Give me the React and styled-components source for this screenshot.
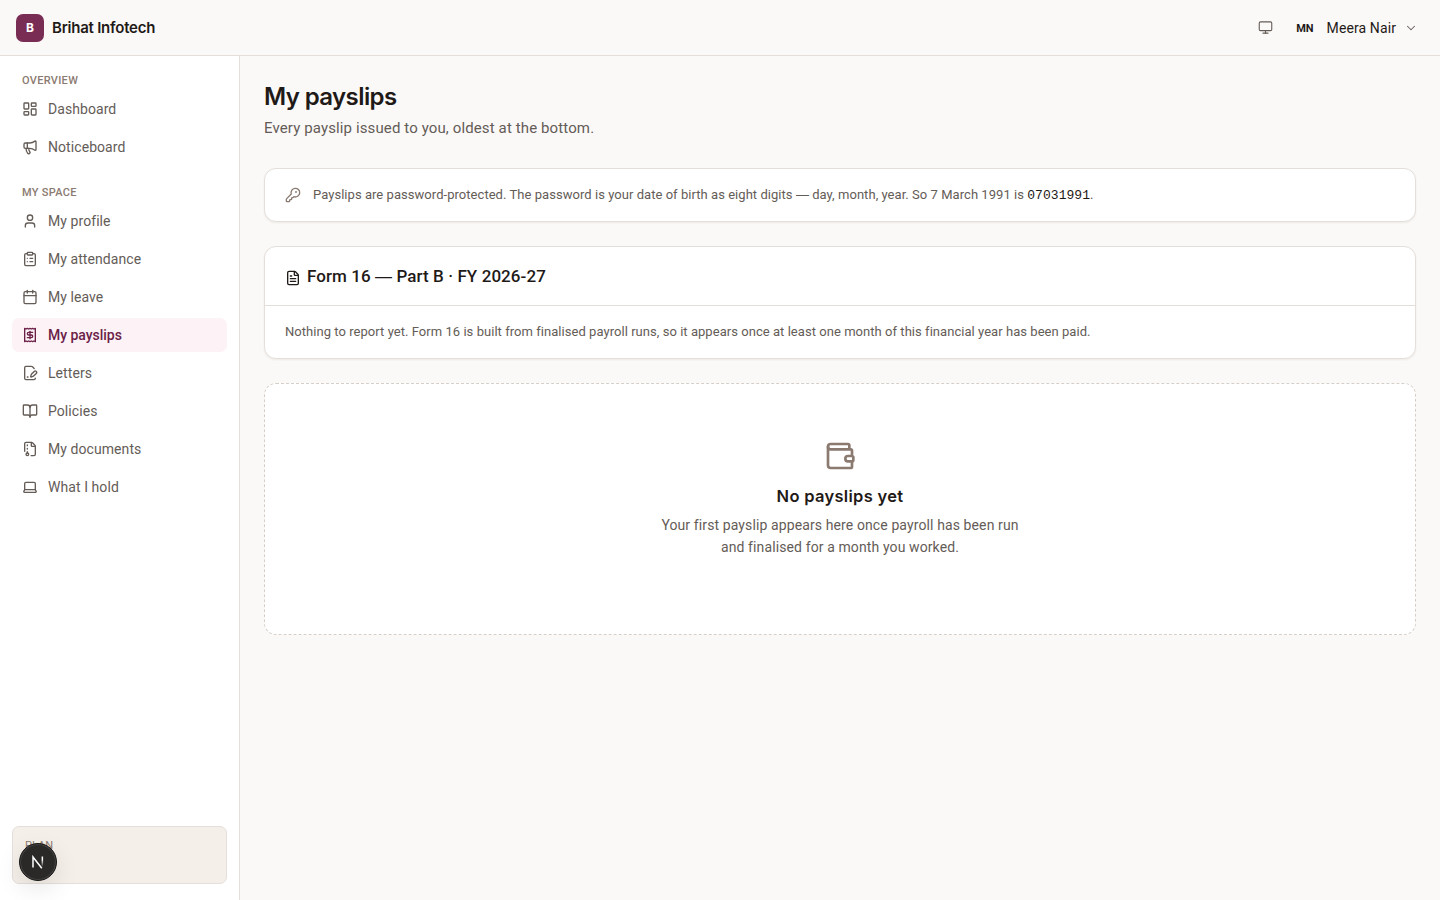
import React from "react";
import styled, { createGlobalStyle, ThemeProvider } from "styled-components";
import {
  BookOpen,
  Calendar,
  ChevronDown,
  ClipboardList,
  FileArchive,
  FilePenLine,
  FileText,
  KeyRound,
  Laptop,
  LayoutDashboard,
  Megaphone,
  Monitor,
  Receipt,
  User,
  Wallet
} from "lucide-react";

const theme = {
  page: "#fbf9f7",
  surface: "#ffffff",
  sunken: "#f5efe9",
  border: "#e4dfdb",
  dashed: "#d6cfc9",
  ink: "#1f1a17",
  muted: "#645c57",
  subtle: "#8a7a70",
  brand: "#7a2d54",
  brandInk: "#6b2147",
  brandSoft: "#fdf2f6",
  body: `Roboto, "Liberation Sans", sans-serif`,
  display: `Inter, "Liberation Sans", sans-serif`,
  mono: `"Liberation Mono", monospace`
};

const GlobalStyle = createGlobalStyle`
  * {
    box-sizing: border-box;
  }
  body {
    margin: 0;
    background-color: ${theme.page};
    color: ${theme.ink};
    font-family: ${theme.body};
    font-size: 14px;
  }
  h1, h2, p, ul {
    margin: 0;
    padding: 0;
  }
`;

const Shell = styled.div`
  display: flex;
  flex-direction: column;
  height: 100vh;
`;

const TopBar = styled.header`
  display: flex;
  align-items: center;
  justify-content: space-between;
  flex-shrink: 0;
  height: 56px;
  padding: 0 22px 0 16px;
  border-bottom: 1px solid ${props => props.theme.border};
`;

const Brand = styled.div`
  display: flex;
  align-items: center;
  gap: 8px;
`;

const BrandMark = styled.span`
  display: flex;
  align-items: center;
  justify-content: center;
  width: 28px;
  height: 28px;
  border-radius: 7px;
  background-color: ${props => props.theme.brand};
  color: #fff;
  font-family: ${props => props.theme.display};
  font-size: 12px;
  font-weight: 700;
`;

const BrandName = styled.span`
  font-family: ${props => props.theme.display};
  font-size: 15px;
  font-weight: 600;
  letter-spacing: -0.23px;
`;

const Account = styled.div`
  display: flex;
  align-items: center;
  svg {
    color: ${props => props.theme.muted};
  }
`;

const Initials = styled.span`
  margin: 1px 13px 0 23px;
  font-size: 11px;
  font-weight: 700;
`;

const UserName = styled.span`
  margin-right: 8px;
  padding-top: 1px;
  font-size: 14px;
  letter-spacing: 0.1px;
`;

const Body = styled.div`
  display: flex;
  flex: 1;
  min-height: 0;
`;

const Sidebar = styled.aside`
  display: flex;
  flex-direction: column;
  justify-content: space-between;
  flex-shrink: 0;
  width: 240px;
  padding: 16px 12px;
  background-color: ${props => props.theme.surface};
  border-right: 1px solid ${props => props.theme.border};
`;

const Groups = styled.nav`
  display: flex;
  flex-direction: column;
  gap: 20px;
`;

const GroupLabel = styled.div`
  height: 20px;
  padding: 1px 10px 0;
  color: ${props => props.theme.subtle};
  font-size: 11px;
  font-weight: 500;
  line-height: 16px;
  letter-spacing: 0.3px;
  text-transform: uppercase;
`;

const NavList = styled.ul`
  display: flex;
  flex-direction: column;
  gap: 4px;
  list-style: none;
`;

const NavItem = styled.li`
  display: flex;
  align-items: center;
  gap: 10px;
  height: 34px;
  padding: 0 10px;
  border-radius: 7px;
  background-color: ${props => (props.$active ? props.theme.brandSoft : "transparent")};
  color: ${props => (props.$active ? props.theme.brandInk : props.theme.muted)};
  font-size: 14px;
  font-weight: ${props => (props.$active ? 500 : 400)};
  letter-spacing: ${props => (props.$active ? "-0.03px" : "0.07px")};
`;

const PlanCard = styled.div`
  height: 58px;
  padding: 11px 12px;
  border: 1px solid ${props => props.theme.border};
  border-radius: 7px;
  background-color: ${props => props.theme.sunken};
  color: ${props => props.theme.subtle};
  font-size: 11px;
  line-height: 16px;
`;

const Main = styled.main`
  display: flex;
  flex-direction: column;
  flex: 1;
  gap: 24px;
  padding: 24px;
`;

const Heading = styled.div`
  height: 64px;
`;

const Title = styled.h1`
  padding-top: 1px;
  font-family: ${props => props.theme.display};
  font-size: 24px;
  font-weight: 600;
  line-height: 32px;
  letter-spacing: -0.6px;
`;

const Subtitle = styled.p`
  margin-top: 3px;
  color: ${props => props.theme.muted};
  font-size: 15px;
  line-height: 24px;
  letter-spacing: 0.12px;
`;

const Card = styled.section`
  border: 1px solid ${props => props.theme.border};
  border-radius: 12px;
  background-color: ${props => props.theme.surface};
  box-shadow: 0 1px 2px rgba(40, 25, 15, 0.07);
`;

const Notice = styled(Card)`
  display: flex;
  align-items: center;
  gap: 12px;
  height: 54px;
  padding: 0 20px;
  svg {
    color: ${props => props.theme.subtle};
  }
`;

const SmallText = styled.p`
  color: ${props => props.theme.muted};
  font-size: 13px;
  line-height: 20px;
  letter-spacing: 0.045px;
`;

const Code = styled.code`
  color: ${props => props.theme.ink};
  font-family: ${props => props.theme.mono};
  font-size: 13px;
  letter-spacing: 0.05px;
`;

// Roboto's em dash is short, Liberation's is a full em
const Dash = styled.span`
  font-family: "Liberation Sans", sans-serif;
  font-weight: 400;
`;

const CardHeader = styled.div`
  display: flex;
  align-items: center;
  gap: 6px;
  height: 59px;
  padding: 0 20px;
  border-bottom: 1px solid ${props => props.theme.border};
  svg {
    margin-top: 4px;
  }
`;

const CardTitle = styled.h2`
  font-size: 17px;
  font-weight: 500;
  line-height: 24px;
  letter-spacing: 0.08px;
`;

const CardBody = styled.div`
  padding: 16px 20px;
`;

const EmptyState = styled.section`
  display: flex;
  flex-direction: column;
  align-items: center;
  height: 252px;
  padding-top: 56px;
  border: 1px dashed ${props => props.theme.dashed};
  border-radius: 12px;
  background-color: ${props => props.theme.surface};
  text-align: center;
  svg {
    color: ${props => props.theme.subtle};
  }
`;

const EmptyTitle = styled.h2`
  margin-top: 12px;
  font-family: ${props => props.theme.display};
  font-size: 16.5px;
  font-weight: 600;
  line-height: 24px;
  letter-spacing: 0.3px;
`;

const EmptyText = styled.p`
  width: 384px;
  margin-top: 6px;
  color: ${props => props.theme.muted};
  font-size: 14px;
  line-height: 22px;
  letter-spacing: 0.11px;
`;

// floats over the plan card
const DevBadge = styled.div`
  position: fixed;
  left: 19px;
  bottom: 19px;
  display: flex;
  align-items: center;
  justify-content: center;
  width: 38px;
  height: 38px;
  border: 1px solid #171717;
  border-radius: 50%;
  background-color: #2a2928;
  box-shadow: inset 0 0 0 1px #454443, 0 8px 24px rgba(0, 0, 0, 0.1);
`;

const groups = [
  {
    label: "Overview",
    items: [
      { label: "Dashboard", icon: LayoutDashboard },
      { label: "Noticeboard", icon: Megaphone }
    ]
  },
  {
    label: "My space",
    items: [
      { label: "My profile", icon: User },
      { label: "My attendance", icon: ClipboardList },
      { label: "My leave", icon: Calendar },
      { label: "My payslips", icon: Receipt, active: true },
      { label: "Letters", icon: FilePenLine },
      { label: "Policies", icon: BookOpen },
      { label: "My documents", icon: FileArchive },
      { label: "What I hold", icon: Laptop }
    ]
  }
];

const NextLogo = () => (
  <svg width="14" height="14" viewBox="0 0 14 14" fill="none">
    <defs>
      <linearGradient id="stem" x1="0" y1="1" x2="0" y2="13" gradientUnits="userSpaceOnUse">
        <stop offset="0.3" stopColor="#fff" />
        <stop offset="0.9" stopColor="#fff" stopOpacity="0" />
      </linearGradient>
    </defs>
    <path d="M2 12.5V2l8.8 11.3" stroke="#fff" strokeWidth="1.5" />
    <rect x="10.6" y="1.5" width="1.5" height="10" fill="url(#stem)" />
  </svg>
);

const App = () => (
  <ThemeProvider theme={theme}>
    <GlobalStyle />
    <Shell>
      <TopBar>
        <Brand>
          <BrandMark>B</BrandMark>
          <BrandName>Brihat Infotech</BrandName>
        </Brand>
        <Account>
          <Monitor size={15} strokeWidth={1.75} />
          <Initials>MN</Initials>
          <UserName>Meera Nair</UserName>
          <ChevronDown size={14} strokeWidth={1.75} />
        </Account>
      </TopBar>
      <Body>
        <Sidebar>
          <Groups>
            {groups.map(group => (
              <div key={group.label}>
                <GroupLabel>{group.label}</GroupLabel>
                <NavList>
                  {group.items.map(({ label, icon: Icon, active }) => (
                    <NavItem key={label} $active={active}>
                      <Icon size={16} />
                      {label}
                    </NavItem>
                  ))}
                </NavList>
              </div>
            ))}
          </Groups>
          <PlanCard>PLAN</PlanCard>
        </Sidebar>
        <Main>
          <Heading>
            <Title>My payslips</Title>
            <Subtitle>Every payslip issued to you, oldest at the bottom.</Subtitle>
          </Heading>
          <Notice>
            <KeyRound size={16} />
            <SmallText>
              Payslips are password-protected. The password is your date of birth as eight
              digits <Dash>—</Dash> day, month, year. So 7 March 1991 is <Code>07031991</Code>.
            </SmallText>
          </Notice>
          <Card>
            <CardHeader>
              <FileText size={16} />
              <CardTitle>
                Form 16 <Dash>—</Dash> Part B · FY 2026-27
              </CardTitle>
            </CardHeader>
            <CardBody>
              <SmallText>
                Nothing to report yet. Form 16 is built from finalised payroll runs, so it
                appears once at least one month of this financial year has been paid.
              </SmallText>
            </CardBody>
          </Card>
          <EmptyState>
            <Wallet size={32} />
            <EmptyTitle>No payslips yet</EmptyTitle>
            <EmptyText>
              Your first payslip appears here once payroll has been run and finalised for a
              month you worked.
            </EmptyText>
          </EmptyState>
        </Main>
      </Body>
    </Shell>
    <DevBadge>
      <NextLogo />
    </DevBadge>
  </ThemeProvider>
);

export default App;
